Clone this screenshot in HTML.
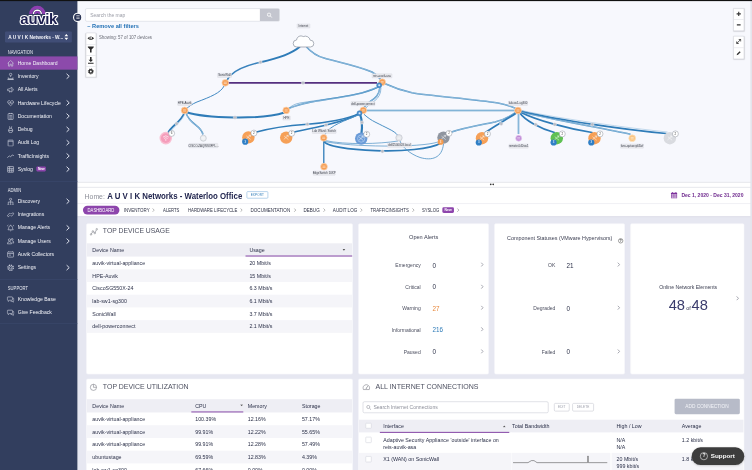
<!DOCTYPE html>
<html lang="en">
<head>
<meta charset="utf-8">
<title>Auvik - Home Dashboard</title>
<style>
html,body{margin:0;padding:0;background:#fff;}
body{width:752px;height:470px;overflow:hidden;position:relative;font-family:"Liberation Sans",sans-serif;}
#app{filter:contrast(1);position:absolute;left:0;top:0;width:1360px;height:850px;transform:scale(0.552941);transform-origin:0 0;overflow:hidden;background:#fff;color:#2b3553;font-size:11px;}
#app *{box-sizing:border-box;}
.abs{position:absolute;}
/* sidebar */
#side{position:absolute;left:0;top:0;width:140.4px;height:850px;background:#323e5e;z-index:5;color:#fff;}
#topbar{position:absolute;left:0;top:0;width:1360px;height:1.5px;background:#111;z-index:20;}
.seclabel{position:absolute;left:14px;font-size:8.3px;letter-spacing:.1px;color:#eceef5;transform:scaleX(0.9);transform-origin:0 50%;}
.nav{position:absolute;left:0;width:140.4px;height:24px;line-height:24px;font-size:10.1px;color:#f2f3f8;padding-left:32px;white-space:nowrap;}
.nav.active{background:#8c4aab;}
.nav svg.ic{position:absolute;left:12px;top:4.8px;width:14.4px;height:14.4px;stroke:#ccd0de;fill:none;stroke-width:0.95;}
.nav .chev{position:absolute;left:118.4px;top:6px;width:9.6px;height:12px;stroke:#dde0ec;fill:none;stroke-width:1.5;}
.nav b{font-weight:normal;display:inline-block;transform:scaleX(0.91);transform-origin:0 50%;}
.newb{display:inline-block;background:#8d45ac;color:#fff;font-size:6.5px;font-weight:bold;line-height:9px;height:9px;padding:0 3px;border-radius:2px;vertical-align:1.5px;margin-left:4px;}
.sdiv{position:absolute;left:0;width:140.4px;height:1px;background:#3d4a6e;}
/* main */
#map{position:absolute;left:140px;top:0;width:1220px;height:329px;background:#f7f8fd;overflow:hidden;}
#resize{z-index:2;position:absolute;left:140px;top:329px;width:1220px;height:9.6px;background:#fff;border-top:1.3px solid #d3d4dd;border-bottom:1.3px solid #d3d4dd;}
#hdr{position:absolute;left:140px;top:338px;width:1220px;height:53px;background:#fff;}
#content{position:absolute;left:140px;top:391px;width:1220px;height:459px;background:#e6e7f1;box-shadow:inset 0 2px 0 #dfe0ea;}
.tab{top:36px;font-size:8.8px;line-height:12px;color:#2d3044;white-space:nowrap;transform:scaleX(0.88);transform-origin:0 50%;}
.ctitle{position:absolute;font-size:13.6px;line-height:16px;color:#4d5060;white-space:nowrap;transform:scaleX(0.908);transform-origin:0 50%;}
.thead{position:absolute;background:#eeeef4;}
.cell{position:absolute;font-size:10.6px;color:#2b3048;white-space:nowrap;transform:scaleX(0.906);transform-origin:0 50%;}
.card{overflow:hidden;position:absolute;background:#fff;border:1px solid #f7f7fb;border-radius:3px;}
</style>
</head>
<body>
<div id="app">
<div id="topbar"></div>
<div class="abs" style="left:1357.4px;top:0;width:2.6px;height:850px;background:#e4e4ec;z-index:19"></div>
<div id="side">
<!--SIDE-->
<svg class="abs" style="left:28px;top:4px" width="84" height="44" viewBox="0 0 84 44">
<path d="M27.6 21.5 A12 12 0 0 1 51.6 21.5" fill="none" stroke="#8e3fb0" stroke-width="6"/>
<path d="M32.6 21.5 A7 7 0 0 1 46.6 21.5" fill="none" stroke="#fff" stroke-width="2.6"/>
<path d="M35.8 21.5 A3.8 3.8 0 0 1 43.4 21.5" fill="none" stroke="#8e3fb0" stroke-width="3.8"/>
<text x="42.1" y="38.6" text-anchor="middle" font-family="Liberation Sans, sans-serif" font-weight="bold" font-size="27" fill="#1d2050" stroke="#fff" stroke-width="4" stroke-linejoin="round" paint-order="stroke" letter-spacing="-0.5">auvik</text>
</svg>
<div class="abs" id="collapse" style="left:132px;top:22.5px;width:17px;height:17px;border-radius:50%;background:#2b3556;border:2px solid #fff;z-index:15"><i style="position:absolute;left:3.5px;top:3.5px;width:6px;height:1.4px;background:#fff;box-shadow:0 2.4px 0 #fff,0 4.8px 0 #fff"></i></div>
<div class="abs" style="left:9px;top:57px;width:121px;height:20px;background:#404d76;border-radius:2px;font-size:8.6px;line-height:20px;padding-left:6px;font-weight:bold;color:#f4f5fa;white-space:nowrap">A U V I K Networks - W...<svg class="abs" style="left:105.5px;top:3px" width="10" height="14" viewBox="0 0 10 14"><path d="M1.6 5.6 L5 1.6 L8.4 5.6 Z M1.6 8.4 L5 12.4 L8.4 8.4 Z" fill="#fff"/></svg></div>
<div class="seclabel" style="top:90px">NAVIGATION</div>
<div class="nav active" style="top:102px"><svg class="ic" viewBox="0 0 12 12"><path d="M1.5 6.2 L6 2 L10.5 6.2 M2.8 5.4 V10.5 H5 V7.5 H7 V10.5 H9.2 V5.4"/></svg><b>Home Dashboard</b></div>
<div class="nav" style="top:126px"><svg class="ic" viewBox="0 0 12 12"><circle cx="6" cy="3" r="1.8"/><path d="M6 4.8 V7 M2.5 9.5 H9.5 M2.5 7.5 V10.5 H9.5 V7.5 M1 10.8 H11"/></svg><b>Inventory</b><svg class="chev" viewBox="0 0 8 10"><path d="M2 1.2 L6 5 L2 8.8"/></svg></div>
<div class="nav" style="top:150px"><svg class="ic" viewBox="0 0 12 12"><path d="M1.5 5 H3.5 L8 2.5 V9.5 L3.5 7.5 H1.5 Z M4 7.8 L4.8 10.3 M9.5 4.5 Q10.8 6 9.5 7.5"/></svg><b>All Alerts</b></div>
<div class="nav" style="top:174px"><svg class="ic" viewBox="0 0 12 12"><path d="M6 10.2 L2 6.3 Q0.8 4.2 2.5 2.8 Q4.4 1.8 6 3.8 Q7.6 1.8 9.5 2.8 Q11.2 4.2 10 6.3 Z M3 6 H5 L5.8 4.8 L6.6 7 L7.2 6 H9"/></svg><b>Hardware Lifecycle</b><svg class="chev" viewBox="0 0 8 10"><path d="M2 1.2 L6 5 L2 8.8"/></svg></div>
<div class="nav" style="top:198px"><svg class="ic" viewBox="0 0 12 12"><rect x="2.2" y="2" width="7.6" height="9" rx="0.8"/><path d="M4.5 1 V2.8 M7.5 1 V2.8 M4 5 H8 M4 7 H8 M4 9 H8"/></svg><b>Documentation</b><svg class="chev" viewBox="0 0 8 10"><path d="M2 1.2 L6 5 L2 8.8"/></svg></div>
<div class="nav" style="top:222px"><svg class="ic" viewBox="0 0 12 12"><ellipse cx="6" cy="7.5" rx="3.2" ry="3.3"/><path d="M4.3 1.2 L5 4.3 M7.7 1.2 L7 4.3 M2.8 7.5 H9.2"/></svg><b>Debug</b><svg class="chev" viewBox="0 0 8 10"><path d="M2 1.2 L6 5 L2 8.8"/></svg></div>
<div class="nav" style="top:246px"><svg class="ic" viewBox="0 0 12 12"><rect x="2.2" y="2" width="7.6" height="9" rx="0.8"/><path d="M2.2 3.8 H9.8"/></svg><b>Audit Log</b><svg class="chev" viewBox="0 0 8 10"><path d="M2 1.2 L6 5 L2 8.8"/></svg></div>
<div class="nav" style="top:270px"><svg class="ic" viewBox="0 0 12 12"><path d="M1 8.5 L4 5.8 L6 7.3 L8.3 4.3 L11 5.5"/></svg><b>TrafficInsights</b><svg class="chev" viewBox="0 0 8 10"><path d="M2 1.2 L6 5 L2 8.8"/></svg></div>
<div class="nav" style="top:294px"><svg class="ic" viewBox="0 0 12 12"><rect x="1.5" y="1.8" width="9" height="8.6" rx="0.6"/><path d="M1.5 4.6 H10.5 M1.5 7.4 H10.5 M4.5 1.8 V10.4 M7.8 4.6 V10.4"/></svg><b>Syslog <span class="newb">New</span></b><svg class="chev" viewBox="0 0 8 10"><path d="M2 1.2 L6 5 L2 8.8"/></svg></div>
<div class="sdiv" style="top:328px"></div>
<div class="seclabel" style="top:339.5px">ADMIN</div>
<div class="nav" style="top:352px"><svg class="ic" viewBox="0 0 12 12"><circle cx="6" cy="2.8" r="1.6"/><path d="M6 4.4 V7 M2.5 9.8 V7 H9.5 V9.8 M1.3 10.5 H3.7 M8.3 10.5 H10.7 M6 7 V9.8 M4.8 10.5 H7.2"/></svg><b>Discovery</b><svg class="chev" viewBox="0 0 8 10"><path d="M2 1.2 L6 5 L2 8.8"/></svg></div>
<div class="nav" style="top:376px"><svg class="ic" viewBox="0 0 12 12"><path d="M5.2 6.8 L3.5 8.5 Q2.3 9.3 1.6 8.4 Q0.8 7.4 1.8 6.4 L4 4.3 Q5 3.6 6 4.4 M6.8 5.2 L8.5 3.5 Q9.7 2.7 10.4 3.6 Q11.2 4.6 10.2 5.6 L8 7.7 Q7 8.4 6 7.6"/></svg><b>Integrations</b></div>
<div class="nav" style="top:400px"><svg class="ic" viewBox="0 0 12 12"><path d="M2 8.8 H10 Q8.8 7.8 8.8 5.5 Q8.8 2.8 6 2.5 Q3.2 2.8 3.2 5.5 Q3.2 7.8 2 8.8 Z M5 10 Q6 11 7 10 M6 1.2 V2.4 M1 3.5 Q1.3 2.2 2.4 1.5 M11 3.5 Q10.7 2.2 9.6 1.5"/></svg><b>Manage Alerts</b><svg class="chev" viewBox="0 0 8 10"><path d="M2 1.2 L6 5 L2 8.8"/></svg></div>
<div class="nav" style="top:424px"><svg class="ic" viewBox="0 0 12 12"><circle cx="4.3" cy="4" r="1.7"/><path d="M1.2 10 Q1.2 6.6 4.3 6.6 Q7.4 6.6 7.4 10 Z"/><circle cx="8.3" cy="3.2" r="1.3"/><path d="M8.3 5.4 Q10.9 5.4 10.9 8.6 H8.4"/></svg><b>Manage Users</b><svg class="chev" viewBox="0 0 8 10"><path d="M2 1.2 L6 5 L2 8.8"/></svg></div>
<div class="nav" style="top:448px"><svg class="ic" viewBox="0 0 12 12"><rect x="1.5" y="2.2" width="9" height="7.8" rx="0.8"/><path d="M1.5 4.6 H10.5 M3.5 7 H6.5 M3 1.2 V2.2 M9 1.2 V2.2"/></svg><b>Auvik Collectors</b></div>
<div class="nav" style="top:472px"><svg class="ic" viewBox="0 0 12 12"><circle cx="6" cy="6" r="1.8"/><circle cx="6" cy="6" r="4" stroke-dasharray="2 1.1" stroke-width="2"/></svg><b>Settings</b><svg class="chev" viewBox="0 0 8 10"><path d="M2 1.2 L6 5 L2 8.8"/></svg></div>
<div class="sdiv" style="top:505px"></div>
<div class="seclabel" style="top:517px">SUPPORT</div>
<div class="nav" style="top:529px"><svg class="ic" viewBox="0 0 12 12"><path d="M2 2.5 H8 Q9 2.5 9 3.5 V6.5 Q9 7.5 8 7.5 H4.5 L2.5 9.3 V7.5 H2 Q1 7.5 1 6.5 V3.5 Q1 2.5 2 2.5 Z M9.3 4.5 H10 Q11 4.5 11 5.5 V8 Q11 9 10 9 V10.5 L8.3 9 H6"/></svg><b>Knowledge Base</b></div>
<div class="nav" style="top:553px"><svg class="ic" viewBox="0 0 12 12"><path d="M2 2.5 H8 Q9 2.5 9 3.5 V6.5 Q9 7.5 8 7.5 H4.5 L2.5 9.3 V7.5 H2 Q1 7.5 1 6.5 V3.5 Q1 2.5 2 2.5 Z M9.3 4.5 H10 Q11 4.5 11 5.5 V8 Q11 9 10 9 V10.5 L8.3 9 H6"/></svg><b>Give Feedback</b></div>
<div class="sdiv" style="top:585px"></div>
<!--/SIDE-->
</div>
<div id="map">
<!--MAP-->
<svg class="abs" style="left:0;top:0" width="1220" height="329" viewBox="77.419 0 674.58 181.92" font-family="Liberation Sans, sans-serif">
<path d="M299.5 47 C290 55 275 59 260.5 62.2" fill="none" stroke="#2f7cb8" stroke-width="2.0" stroke-linecap="round"/>
<path d="M260.5 62.2 C248 65 236 70 231 75 C228.5 77.5 227.3 79.5 226.6 81" fill="none" stroke="#3a83bd" stroke-width="1.6" stroke-linecap="round"/>
<path d="M306.5 47 C313 54 320 57 324 58 C335 61.5 355 65 372 72 C376 74 379 77 381 80" fill="none" stroke="#4a90c4" stroke-width="1.5"/><path d="M306.5 47 C313 54 320 57 324 58 C335 61.5 355 65 372 72 C376 74 379 77 381 80" fill="none" stroke="#d9e8f4" stroke-width="0.45"/>
<path d="M227 82.8 H377" stroke="#55307f" stroke-width="1.8" fill="none"/>
<path d="M224.3 85.5 C221 93 210 97 197 102 C192 104 189 106.5 187 108.3" fill="none" stroke="#3f88c2" stroke-width="1.0"/>
<path d="M186 112 C205 118.5 262 120 284.5 112.5" fill="none" stroke="#2f7cb8" stroke-width="1.9" stroke-linecap="round"/>
<path d="M288 109 C310 98 352 100 378 87" fill="none" stroke="#4a90c4" stroke-width="1.5"/><path d="M288 109 C310 98 352 100 378 87" fill="none" stroke="#d9e8f4" stroke-width="0.45"/>
<path d="M379 87 C360 96 330 98 300 103 C294 104 290 107 288 109" fill="none" stroke="#4a90c4" stroke-width="0.6"/>
<path d="M184.3 113 C181 122 171 126 168 133" fill="none" stroke="#2f7cb8" stroke-width="1.8" stroke-linecap="round"/>
<path d="M185 113 C183 121 173 127 169.5 133" fill="none" stroke="#9cc3e0" stroke-width="0.6"/>
<path d="M186 113 C190 125 201 125 203 134.5" fill="none" stroke="#4a90c4" stroke-width="1.5"/><path d="M186 113 C190 125 201 125 203 134.5" fill="none" stroke="#d9e8f4" stroke-width="0.45"/>
<path d="M359 113.6 C348 119 325 123 307.4 124.2 C290 125.4 270 128 255.5 132.3" fill="none" stroke="#2f7cb8" stroke-width="1.5" stroke-linecap="round"/>
<path d="M359 114 C348 120 332 123.5 326 125 C316 127.8 302 129.5 293.5 132.3" fill="none" stroke="#2f7cb8" stroke-width="1.5" stroke-linecap="round"/>
<path d="M359 114.6 C345 121 330 125 325 134.5" fill="none" stroke="#4a90c4" stroke-width="1.0"/>
<path d="M379.8 87.5 C379 100 368 100 364 108" fill="none" stroke="#4a90c4" stroke-width="1.5"/><path d="M379.8 87.5 C379 100 368 100 364 108" fill="none" stroke="#d9e8f4" stroke-width="0.45"/>
<path d="M381 87.5 C381 101 370 102 365.5 108.5" fill="none" stroke="#4a90c4" stroke-width="0.6"/>
<path d="M384.5 83.5 C392 87 402 90.5 412 92.7 C430 96 475 99 498 103 C506 104.5 512 106.5 516 108.7" fill="none" stroke="#4a90c4" stroke-width="1.5"/><path d="M384.5 83.5 C392 87 402 90.5 412 92.7 C430 96 475 99 498 103 C506 104.5 512 106.5 516 108.7" fill="none" stroke="#d9e8f4" stroke-width="0.45"/>
<path d="M366 110.4 H515" fill="none" stroke="#4a90c4" stroke-width="1.5"/><path d="M366 110.4 H515" fill="none" stroke="#d9e8f4" stroke-width="0.45"/>
<path d="M360.3 115 C362 120 362.5 126 361.5 133" fill="none" stroke="#2f7cb8" stroke-width="2.2" stroke-linecap="round"/>
<path d="M364 114.3 C368 118 372 120.5 375 122 C381 125 385 127 389 129 C393 131 396 133 397.5 135" fill="none" stroke="#4a90c4" stroke-width="1.0"/>
<path d="M323.8 141 V164" fill="none" stroke="#2f7cb8" stroke-width="1.3" stroke-linecap="round"/>
<path d="M324 141 C326 151 420 156 441 143" fill="none" stroke="#2f7cb8" stroke-width="1.6" stroke-linecap="round"/>
<path d="M325 140.5 C345 145 380 144 398 141" fill="none" stroke="#4a90c4" stroke-width="0.7"/>
<path d="M325 141.5 C350 147 420 148 438 142" fill="none" stroke="#4a90c4" stroke-width="0.7"/>
<path d="M400 141 C402 147 410 154 420 157.5 C432 161 442 158 443.5 144" fill="none" stroke="#4a90c4" stroke-width="0.8"/>
<path d="M450 132.5 C465 127.5 485 124.2 495 122 C503 120 511 116 516 112.2" fill="none" stroke="#4a90c4" stroke-width="1.5"/><path d="M450 132.5 C465 127.5 485 124.2 495 122 C503 120 511 116 516 112.2" fill="none" stroke="#d9e8f4" stroke-width="0.45"/>
<path d="M517 112.5 C508 119 494 126 485.5 132.5" fill="none" stroke="#2f7cb8" stroke-width="1.7" stroke-linecap="round"/>
<path d="M518.5 114 V134" fill="none" stroke="#4a90c4" stroke-width="1.5"/><path d="M518.5 114 V134" fill="none" stroke="#d9e8f4" stroke-width="0.45"/>
<path d="M519.5 112.5 C525 120.5 540 128.5 554.5 132.5" fill="none" stroke="#2f7cb8" stroke-width="1.7" stroke-linecap="round"/>
<path d="M520 112 C537 120.5 567 128.5 592 132.5" fill="none" stroke="#2f7cb8" stroke-width="1.7" stroke-linecap="round"/>
<path d="M520.5 111.5 C552 120 600 127.5 630.5 134.2" fill="none" stroke="#4a90c4" stroke-width="1.5"/><path d="M520.5 111.5 C552 120 600 127.5 630.5 134.2" fill="none" stroke="#d9e8f4" stroke-width="0.45"/>
<path d="M521 111 C560 120.5 625 129.5 666 133.5" fill="none" stroke="#2f7cb8" stroke-width="1.7" stroke-linecap="round"/>
<path d="M521 110.4 C562 119 628 128 667.5 132" fill="none" stroke="#9cc3e0" stroke-width="0.6"/>
<circle cx="260.5" cy="62.2" r="1.65" fill="#b7bbc4" stroke="#e9ebf1" stroke-width="0.5"/>
<circle cx="303" cy="82.8" r="1.65" fill="#b7bbc4" stroke="#e9ebf1" stroke-width="0.5"/>
<circle cx="235" cy="117.5" r="1.65" fill="#b7bbc4" stroke="#e9ebf1" stroke-width="0.5"/>
<circle cx="176.6" cy="123.7" r="1.65" fill="#b7bbc4" stroke="#e9ebf1" stroke-width="0.5"/>
<circle cx="307.4" cy="124.2" r="1.65" fill="#b7bbc4" stroke="#e9ebf1" stroke-width="0.5"/>
<circle cx="326" cy="124.9" r="1.65" fill="#b7bbc4" stroke="#e9ebf1" stroke-width="0.5"/>
<circle cx="362" cy="122.5" r="1.65" fill="#b7bbc4" stroke="#e9ebf1" stroke-width="0.5"/>
<circle cx="382.4" cy="151.3" r="1.65" fill="#b7bbc4" stroke="#e9ebf1" stroke-width="0.5"/>
<circle cx="501.3" cy="123.8" r="1.65" fill="#b7bbc4" stroke="#e9ebf1" stroke-width="0.5"/>
<circle cx="535.8" cy="124.6" r="1.65" fill="#b7bbc4" stroke="#e9ebf1" stroke-width="0.5"/>
<circle cx="554.8" cy="124.4" r="1.65" fill="#b7bbc4" stroke="#e9ebf1" stroke-width="0.5"/>
<circle cx="592.3" cy="124.4" r="1.65" fill="#b7bbc4" stroke="#e9ebf1" stroke-width="0.5"/>
<path d="M296.8 47 a3.5 3.5 0 0 1 -0.2 -7 a4.3 4.3 0 0 1 6.6 -3.4 a5 5 0 0 1 7 3.6 a3.2 3.2 0 0 1 0.4 6.8 z" fill="#fff" stroke="#8f96a3" stroke-width="0.75"/>
<circle cx="225.3" cy="82.8" r="3.4" fill="#f6a057" stroke="#fbd9bd" stroke-width="0.7"/><path d="M223.8 82.2 h3 M223.8 83.5 h3" stroke="#fff" stroke-width="0.5" opacity="0.85"/>
<circle cx="382.2" cy="82.2" r="3.4" fill="#f6a057" stroke="#fbd9bd" stroke-width="0.7"/><path d="M380.7 81.60000000000001 h3 M380.7 82.9 h3" stroke="#fff" stroke-width="0.5" opacity="0.85"/>
<circle cx="379.2" cy="85.2" r="2.5" fill="#4a8dcf" stroke="#2f7cb8" stroke-width="0.5"/><circle cx="379.2" cy="85.2" r="1" fill="#d7e6f6"/>
<circle cx="184.6" cy="110.4" r="3.4" fill="#f6a057" stroke="#fbd9bd" stroke-width="0.7"/><path d="M183.1 109.80000000000001 h3 M183.1 111.10000000000001 h3" stroke="#fff" stroke-width="0.5" opacity="0.85"/>
<circle cx="286.2" cy="110.4" r="3.4" fill="#f6a057" stroke="#fbd9bd" stroke-width="0.7"/><path d="M284.7 109.80000000000001 h3 M284.7 111.10000000000001 h3" stroke="#fff" stroke-width="0.5" opacity="0.85"/>
<circle cx="363.3" cy="110.3" r="3.4" fill="#f6a057" stroke="#fbd9bd" stroke-width="0.7"/><path d="M361.8 109.7 h3 M361.8 111.0 h3" stroke="#fff" stroke-width="0.5" opacity="0.85"/>
<circle cx="359.5" cy="113.2" r="2.5" fill="#4a8dcf" stroke="#2f7cb8" stroke-width="0.5"/><circle cx="359.5" cy="113.2" r="1" fill="#d7e6f6"/>
<circle cx="518" cy="110.5" r="3.4" fill="#f6a057" stroke="#fbd9bd" stroke-width="0.7"/><path d="M516.5 109.9 h3 M516.5 111.2 h3" stroke="#fff" stroke-width="0.5" opacity="0.85"/>
<circle cx="323.7" cy="137.8" r="3.4" fill="#f6a057" stroke="#fbd9bd" stroke-width="0.7"/><path d="M322.2 137.20000000000002 h3 M322.2 138.5 h3" stroke="#fff" stroke-width="0.5" opacity="0.85"/>
<circle cx="324" cy="166.7" r="3.4" fill="#f6a057" stroke="#fbd9bd" stroke-width="0.7"/><path d="M322.5 166.1 h3 M322.5 167.39999999999998 h3" stroke="#fff" stroke-width="0.5" opacity="0.85"/>
<circle cx="165.8" cy="138.1" r="6.3" fill="#f9bfd2"/><circle cx="165.8" cy="138.1" r="4.9" fill="#f59dbb"/><path d="M163 137.1 q2.8 -2.6 5.6 0 M164 138.5 q1.8 -1.6 3.6 0" stroke="#fff" stroke-width="0.6" fill="none"/><circle cx="165.8" cy="139.9" r="0.6" fill="#fff"/>
<circle cx="171.6" cy="133.4" r="3" fill="#fff" stroke="#8d939e" stroke-width="0.5"/><text x="171.6" y="134.4" text-anchor="middle" font-size="3" fill="#444">6</text>
<circle cx="203.3" cy="138.2" r="3.0" fill="#eceef1" stroke="#c2c5cb" stroke-width="0.7"/><path d="M201.8 137.6 h3 M201.8 138.89999999999998 h3" stroke="#fff" stroke-width="0.5" opacity="0.85"/>
<circle cx="248.4" cy="137.4" r="6.2" fill="#f6a057"/><path d="M246.0 139.20000000000002 L250.4 135.20000000000002 M250.4 135.20000000000002 h-1.8 M250.4 135.20000000000002 v1.8 M246.4 135.9 L250.6 139.4" stroke="#fff" stroke-width="0.55" fill="none" opacity="0.9"/><circle cx="253.9" cy="133.1" r="3" fill="#fff" stroke="#8d939e" stroke-width="0.5"/><text x="253.9" y="134.1" text-anchor="middle" font-size="3" fill="#444">2</text><circle cx="245.20000000000002" cy="141.70000000000002" r="3.1" fill="#2f7fc6"/><text x="245.20000000000002" y="142.70000000000002" text-anchor="middle" font-size="2.9" fill="#fff">3</text>
<circle cx="286.2" cy="137.6" r="6.2" fill="#f6a057"/><path d="M283.8 139.4 L288.2 135.4 M288.2 135.4 h-1.8 M288.2 135.4 v1.8 M284.2 136.1 L288.4 139.6" stroke="#fff" stroke-width="0.55" fill="none" opacity="0.9"/><circle cx="291.7" cy="133.29999999999998" r="3" fill="#fff" stroke="#8d939e" stroke-width="0.5"/><text x="291.7" y="134.29999999999998" text-anchor="middle" font-size="3" fill="#444">2</text>
<circle cx="361.2" cy="138.6" r="6.2" fill="#6a9bd8"/><path d="M358.8 140.4 L363.2 136.4 M363.2 136.4 h-1.8 M363.2 136.4 v1.8 M359.2 137.1 L363.4 140.6" stroke="#fff" stroke-width="0.55" fill="none" opacity="0.9"/><circle cx="366.7" cy="134.29999999999998" r="3" fill="#fff" stroke="#8d939e" stroke-width="0.5"/><text x="366.7" y="135.29999999999998" text-anchor="middle" font-size="3" fill="#444">2</text>
<circle cx="361.2" cy="138.6" r="3.6" fill="none" stroke="#a9c8ee" stroke-width="0.8"/>
<circle cx="399" cy="137.8" r="3.2" fill="#e4e6ea" stroke="#c3c6ce" stroke-width="0.7"/><path d="M397.5 137.20000000000002 h3 M397.5 138.5 h3" stroke="#fff" stroke-width="0.5" opacity="0.85"/>
<circle cx="443.5" cy="137.6" r="6.2" fill="#8f959f"/><path d="M441.1 139.4 L445.5 135.4 M445.5 135.4 h-1.8 M445.5 135.4 v1.8 M441.5 136.1 L445.7 139.6" stroke="#fff" stroke-width="0.55" fill="none" opacity="0.9"/><circle cx="449.0" cy="133.29999999999998" r="3" fill="#fff" stroke="#8d939e" stroke-width="0.5"/><text x="449.0" y="134.29999999999998" text-anchor="middle" font-size="3" fill="#444">2</text>
<circle cx="440.6" cy="141.9" r="2.9" fill="#f59b4e"/><text x="440.6" y="142.9" text-anchor="middle" font-size="2.9" fill="#fff">3</text>
<circle cx="482" cy="138.2" r="6.2" fill="#f6a057"/><path d="M479.6 140.0 L484 136.0 M484 136.0 h-1.8 M484 136.0 v1.8 M480 136.7 L484.2 140.2" stroke="#fff" stroke-width="0.55" fill="none" opacity="0.9"/><circle cx="487.5" cy="133.89999999999998" r="3" fill="#fff" stroke="#8d939e" stroke-width="0.5"/><text x="487.5" y="134.89999999999998" text-anchor="middle" font-size="3" fill="#444">2</text><circle cx="478.8" cy="142.5" r="3.1" fill="#2f7fc6"/><text x="478.8" y="143.5" text-anchor="middle" font-size="2.9" fill="#fff">3</text>
<circle cx="518.7" cy="138.2" r="3.0" fill="#c08ad6" stroke="#e5cdf0" stroke-width="0.7"/><path d="M517.2 137.6 h3 M517.2 138.89999999999998 h3" stroke="#fff" stroke-width="0.5" opacity="0.85"/>
<circle cx="556.8" cy="138.2" r="6.2" fill="#5fc152"/><path d="M554.4 140.0 L558.8 136.0 M558.8 136.0 h-1.8 M558.8 136.0 v1.8 M554.8 136.7 L559.0 140.2" stroke="#fff" stroke-width="0.55" fill="none" opacity="0.9"/><circle cx="562.3" cy="133.89999999999998" r="3" fill="#fff" stroke="#8d939e" stroke-width="0.5"/><text x="562.3" y="134.89999999999998" text-anchor="middle" font-size="3" fill="#444">2</text><circle cx="553.5999999999999" cy="142.5" r="3.1" fill="#2f7fc6"/><text x="553.5999999999999" y="143.5" text-anchor="middle" font-size="2.9" fill="#fff">3</text>
<circle cx="594.5" cy="138.2" r="6.2" fill="#f6a057"/><path d="M592.1 140.0 L596.5 136.0 M596.5 136.0 h-1.8 M596.5 136.0 v1.8 M592.5 136.7 L596.7 140.2" stroke="#fff" stroke-width="0.55" fill="none" opacity="0.9"/><circle cx="600.0" cy="133.89999999999998" r="3" fill="#fff" stroke="#8d939e" stroke-width="0.5"/><text x="600.0" y="134.89999999999998" text-anchor="middle" font-size="3" fill="#444">2</text><circle cx="591.3" cy="142.5" r="3.1" fill="#2f7fc6"/><text x="591.3" y="143.5" text-anchor="middle" font-size="2.9" fill="#fff">3</text>
<circle cx="632.2" cy="138.2" r="3.4" fill="#fac684" stroke="#fde3bf" stroke-width="0.7"/><path d="M630.7 137.6 h3 M630.7 138.89999999999998 h3" stroke="#fff" stroke-width="0.5" opacity="0.85"/>
<circle cx="669.9" cy="138.2" r="6.2" fill="#d9dbe0"/><path d="M667.5 140.0 L671.9 136.0 M671.9 136.0 h-1.8 M671.9 136.0 v1.8 M667.9 136.7 L672.1 140.2" stroke="#fff" stroke-width="0.55" fill="none" opacity="0.9"/><circle cx="675.4" cy="133.89999999999998" r="3" fill="#fff" stroke="#8d939e" stroke-width="0.5"/><text x="675.4" y="134.89999999999998" text-anchor="middle" font-size="3" fill="#444">2</text>
<rect x="297.0" y="23.9" width="13.0" height="4.2" rx="0.5" fill="#e9eaee" stroke="#cfd1d8" stroke-width="0.3"/><text x="303.5" y="27.0" text-anchor="middle" font-size="2.9" fill="#3b3f4c">Internet</text>
<rect x="217.5" y="73.3" width="14.0" height="4.2" rx="0.5" fill="#e9eaee" stroke="#cfd1d8" stroke-width="0.3"/><text x="224.5" y="76.4" text-anchor="middle" font-size="2.9" fill="#3b3f4c">SonicWall</text>
<rect x="372.0" y="73.7" width="20.0" height="4.2" rx="0.5" fill="#e9eaee" stroke="#cfd1d8" stroke-width="0.3"/><text x="382" y="76.8" text-anchor="middle" font-size="2.9" fill="#3b3f4c">reis-auvik-asa</text>
<rect x="177.6" y="101.2" width="14.0" height="4.2" rx="0.5" fill="#e9eaee" stroke="#cfd1d8" stroke-width="0.3"/><text x="184.6" y="104.3" text-anchor="middle" font-size="2.9" fill="#3b3f4c">HPE-Auvik</text>
<rect x="282.8" y="115.9" width="7.5" height="4.2" rx="0.5" fill="#e9eaee" stroke="#cfd1d8" stroke-width="0.3"/><text x="286.5" y="119.0" text-anchor="middle" font-size="2.9" fill="#3b3f4c">HPE</text>
<rect x="351.0" y="101.5" width="24.0" height="4.2" rx="0.5" fill="#e9eaee" stroke="#cfd1d8" stroke-width="0.3"/><text x="363" y="104.6" text-anchor="middle" font-size="2.9" fill="#3b3f4c">dell-powerconnect</text>
<rect x="508.5" y="101.2" width="19.0" height="4.2" rx="0.5" fill="#e9eaee" stroke="#cfd1d8" stroke-width="0.3"/><text x="518" y="104.3" text-anchor="middle" font-size="2.9" fill="#3b3f4c">lab-sw1-sg300</text>
<rect x="312.2" y="129.2" width="24.0" height="4.2" rx="0.5" fill="#e9eaee" stroke="#cfd1d8" stroke-width="0.3"/><text x="324.2" y="132.3" text-anchor="middle" font-size="2.9" fill="#3b3f4c">Lab Wlan/c Switch</text>
<rect x="313.2" y="171.1" width="22.0" height="4.2" rx="0.5" fill="#e9eaee" stroke="#cfd1d8" stroke-width="0.3"/><text x="324.2" y="174.2" text-anchor="middle" font-size="2.9" fill="#3b3f4c">EdgeSwitch 10XP</text>
<rect x="188.9" y="143.5" width="29.0" height="4.2" rx="0.5" fill="#e9eaee" stroke="#cfd1d8" stroke-width="0.3"/><text x="203.4" y="146.6" text-anchor="middle" font-size="2.9" fill="#3b3f4c">CISCO-ZAQWSXFPL...</text>
<rect x="387.5" y="143.1" width="24.0" height="4.2" rx="0.5" fill="#e9eaee" stroke="#cfd1d8" stroke-width="0.3"/><text x="399.5" y="146.2" text-anchor="middle" font-size="2.9" fill="#3b3f4c">dell2500003.local</text>
<rect x="509.2" y="144.0" width="19.0" height="4.2" rx="0.5" fill="#e9eaee" stroke="#cfd1d8" stroke-width="0.3"/><text x="518.7" y="147.1" text-anchor="middle" font-size="2.9" fill="#3b3f4c">remote.040sw1</text>
<rect x="620.5" y="144.0" width="23.0" height="4.2" rx="0.5" fill="#e9eaee" stroke="#cfd1d8" stroke-width="0.3"/><text x="632" y="147.1" text-anchor="middle" font-size="2.9" fill="#3b3f4c">fans-qatuovjd45zf</text>
</svg>
<div class="abs" style="left:13.5px;top:14.5px;width:352px;height:24.5px;background:#fff;border:1px solid #d2d4dc;border-radius:3px;font-size:9px;line-height:22px;color:#9a9ca6;padding-left:8px"><span style="display:inline-block;font-size:10px;transform:scaleX(0.9);transform-origin:0 50%">Search the map</span><div class="abs" style="right:0;top:0;width:35px;height:22.5px;background:#c4c6cf;border-radius:0 2px 2px 0"><svg class="abs" style="left:12px;top:6px" width="11" height="11" viewBox="0 0 11 11"><circle cx="4.5" cy="4.5" r="3" fill="none" stroke="#fff" stroke-width="1.5"/><path d="M6.8 6.8 L9.8 9.8" stroke="#fff" stroke-width="1.6"/></svg></div></div>
<div class="abs" style="left:17.5px;top:40px;font-size:11.3px;line-height:12px;font-weight:bold;color:#1f6fb4;white-space:nowrap;transform:scaleX(0.905);transform-origin:0 50%">– Remove all filters</div>
<div class="abs" style="left:39px;top:62.5px;font-size:8.8px;line-height:10px;color:#6a6c76;white-space:nowrap;transform:scaleX(0.892);transform-origin:0 50%">Showing: 57 of 107 devices</div>
<div class="abs" style="left:14.5px;top:59px;width:19.5px;height:80.5px;background:#fff;border:1px solid #d5d7de;border-radius:2px;box-shadow:0 1px 2px rgba(0,0,0,.12)"><svg class="abs" style="left:1.6px;top:2.3px" width="14.4" height="14.4" viewBox="0 0 12 12"><path d="M1 6 Q6 0.6 11 6 Q6 11.4 1 6 Z" fill="#2a2a2a"/><circle cx="6" cy="5.6" r="2" fill="#fff"/><circle cx="6" cy="5.6" r="1.1" fill="#2a2a2a"/></svg><svg class="abs" style="left:1.6px;top:22.3px" width="14.4" height="14.4" viewBox="0 0 12 12"><path d="M1.5 1.6 H10.5 V2.8 L7.2 6.4 V10.8 H4.8 V6.4 L1.5 2.8 Z" fill="#2a2a2a"/></svg><i class="abs" style="left:0;top:19.5px;width:17.5px;height:1px;background:#dfe0e6"></i><svg class="abs" style="left:1.6px;top:42.3px" width="14.4" height="14.4" viewBox="0 0 12 12"><path d="M4.8 1 H7.2 V5 H9.4 L6 8.6 L2.6 5 H4.8 Z M1.8 9.4 H10.2 V11 H1.8 Z" fill="#2a2a2a"/></svg><i class="abs" style="left:0;top:39.5px;width:17.5px;height:1px;background:#dfe0e6"></i><svg class="abs" style="left:1.6px;top:62.3px" width="14.4" height="14.4" viewBox="0 0 12 12"><circle cx="6" cy="6" r="2.5" fill="none" stroke="#2a2a2a" stroke-width="2.1"/><circle cx="6" cy="6" r="3.8" fill="none" stroke="#2a2a2a" stroke-width="1.3" stroke-dasharray="1.5 1.485"/></svg><i class="abs" style="left:0;top:59.5px;width:17.5px;height:1px;background:#dfe0e6"></i></div>
<div class="abs" style="left:1185.5px;top:14.5px;width:20.5px;height:41.5px;background:#fff;border:1px solid #d5d7de;border-radius:2px;box-shadow:0 1px 2px rgba(0,0,0,.12)"><i class="abs" style="left:0;top:19.7px;width:18.5px;height:1px;background:#dfe0e6"></i><svg class="abs" style="left:4.2px;top:4.4px" width="10" height="10" viewBox="0 0 10 10"><path d="M5 1.2 V8.8 M1.2 5 H8.8" stroke="#333" stroke-width="2"/></svg><svg class="abs" style="left:4.2px;top:24.6px" width="10" height="10" viewBox="0 0 10 10"><path d="M1.6 5 H8.4" stroke="#333" stroke-width="2"/></svg></div>
<div class="abs" style="left:1185.5px;top:65px;width:20.5px;height:41.5px;background:#fff;border:1px solid #d5d7de;border-radius:2px;box-shadow:0 1px 2px rgba(0,0,0,.12)"><i class="abs" style="left:0;top:19.7px;width:18.5px;height:1px;background:#dfe0e6"></i><svg class="abs" style="left:4.2px;top:4.4px" width="10" height="10" viewBox="0 0 10 10"><path d="M1.5 8.5 L8.5 1.5 M5 1.3 H8.7 V5 M5 8.7 H1.3 V5" stroke="#333" stroke-width="1.5" fill="none"/></svg><svg class="abs" style="left:4.2px;top:24.6px" width="10" height="10" viewBox="0 0 10 10"><path d="M1.2 8.8 L2 6.2 L6.6 1.6 L8.4 3.4 L3.8 8 Z" fill="#333"/></svg></div>
<!--/MAP-->
</div>
<div id="resize"><i class="abs" style="left:745.5px;top:2px;width:3px;height:3px;border-radius:50%;background:#333;box-shadow:4.5px 0 0 #333"></i></div>
<div id="hdr">
<!--HDR-->
<div class="abs" style="left:13.4px;top:6px;height:19px;line-height:19px;white-space:nowrap;transform:scaleX(0.928);transform-origin:0 50%"><span style="font-size:13.4px;color:#8d8f99">Home:</span><span style="font-size:15.3px;font-weight:bold;color:#22264f;margin-left:4.6px">A U V I K Networks - Waterloo Office</span></div>
<div class="abs" style="left:306.2px;top:8.2px;width:38.5px;height:13px;border:1px solid #7fb0dc;border-radius:2px;font-size:5.6px;line-height:11.4px;text-align:center;color:#2f7cb8;letter-spacing:.2px">EXPORT</div>
<svg class="abs" style="left:1072.8px;top:8.6px" width="12.4" height="12.4" viewBox="0 0 12 12"><rect x="0.5" y="1.6" width="11" height="10" rx="1" fill="#7b2d9b"/><path d="M3 0.3 V2.6 M9 0.3 V2.6" stroke="#7b2d9b" stroke-width="1.4"/><path d="M0.5 5 H11.5 M0.5 7.3 H11.5 M0.5 9.5 H11.5 M3.3 3.6 V11.6 M6 3.6 V11.6 M8.7 3.6 V11.6" stroke="#fff" stroke-width="0.7"/></svg>
<div class="abs" style="left:1092.3px;top:9px;font-size:9.1px;line-height:12px;font-weight:bold;color:#6f2a8e;white-space:nowrap">Dec 1, 2020 - Dec 31, 2020</div>
<div class="abs" style="left:0;top:29.6px;width:1220px;height:1px;background:#e4e5ec"></div>
<div class="abs" style="left:9.7px;top:33.6px;width:66px;height:16px;border-radius:8px;background:#8d45ac;color:#fff;font-size:8.7px;line-height:16.4px;text-align:center"><span style="display:inline-block;transform:scaleX(0.88)">DASHBOARD</span></div>
<div class="abs tab" style="left:84.1px;transform:scaleX(0.915)">INVENTORY</div>
<svg class="abs" style="left:134.7px;top:38px" width="5" height="8" viewBox="0 0 5 8"><path d="M1 1 L4 4 L1 7" fill="none" stroke="#777" stroke-width="1"/></svg>
<div class="abs tab" style="left:154.8px;transform:scaleX(0.86)">ALERTS</div>
<div class="abs tab" style="left:199.5px;transform:scaleX(0.88)">HARDWARE LIFECYCLE</div>
<svg class="abs" style="left:293.8px;top:38px" width="5" height="8" viewBox="0 0 5 8"><path d="M1 1 L4 4 L1 7" fill="none" stroke="#777" stroke-width="1"/></svg>
<div class="abs tab" style="left:312.5px;transform:scaleX(0.94)">DOCUMENTATION</div>
<svg class="abs" style="left:390.6px;top:38px" width="5" height="8" viewBox="0 0 5 8"><path d="M1 1 L4 4 L1 7" fill="none" stroke="#777" stroke-width="1"/></svg>
<div class="abs tab" style="left:409.4px;transform:scaleX(0.93)">DEBUG</div>
<svg class="abs" style="left:444.0px;top:38px" width="5" height="8" viewBox="0 0 5 8"><path d="M1 1 L4 4 L1 7" fill="none" stroke="#777" stroke-width="1"/></svg>
<div class="abs tab" style="left:461.9px;transform:scaleX(0.93)">AUDIT LOG</div>
<svg class="abs" style="left:510.9px;top:38px" width="5" height="8" viewBox="0 0 5 8"><path d="M1 1 L4 4 L1 7" fill="none" stroke="#777" stroke-width="1"/></svg>
<div class="abs tab" style="left:530.0px;transform:scaleX(0.88)">TRAFFICINSIGHTS</div>
<svg class="abs" style="left:604.9px;top:38px" width="5" height="8" viewBox="0 0 5 8"><path d="M1 1 L4 4 L1 7" fill="none" stroke="#777" stroke-width="1"/></svg>
<div class="abs tab" style="left:622.5px;transform:scaleX(0.87)">SYSLOG</div>
<svg class="abs" style="left:686.3px;top:38px" width="5" height="8" viewBox="0 0 5 8"><path d="M1 1 L4 4 L1 7" fill="none" stroke="#777" stroke-width="1"/></svg>
<div class="abs" style="left:659.9px;top:37px;width:21px;height:9.6px;border-radius:2.5px;background:#8d45ac;color:#fff;font-size:6.2px;font-weight:bold;line-height:9.6px;text-align:center">New</div>
<!--/HDR-->
</div>
<div id="content">
<!--CONTENT-->
<div class="card" style="left:15.8px;top:13px;width:482.2px;height:272.5px"><div class="abs" style="left:-1.8px;top:0px"><svg class="abs" style="left:6.5px;top:5.5px" width="16" height="16" viewBox="0 0 16 16"><path d="M2.5 13 L6 7.5 L9.5 10.5 L13 3.5" fill="none" stroke="#74777f" stroke-width="1"/><circle cx="2.5" cy="13" r="1.4" fill="#fff" stroke="#74777f" stroke-width="0.9"/><circle cx="6" cy="7.5" r="1.4" fill="#fff" stroke="#74777f" stroke-width="0.9"/><circle cx="9.5" cy="10.5" r="1.4" fill="#fff" stroke="#74777f" stroke-width="0.9"/><circle cx="13" cy="3.5" r="1.4" fill="#fff" stroke="#74777f" stroke-width="0.9"/></svg>
<div class="ctitle" style="left:31px;top:5.4px">TOP DEVICE USAGE</div>
<div class="thead" style="left:0;top:35px;width:482px;height:24px"></div>
<div class="cell" style="left:11.6px;top:35px;line-height:24px">Device Name</div>
<div class="cell" style="left:295.5px;top:35px;line-height:24px">Usage</div>
<div class="abs" style="left:289px;top:57.2px;width:194px;height:2px;background:#9159af"></div>
<svg class="abs" style="left:463.5px;top:44.5px" width="6" height="4" viewBox="0 0 6 4"><path d="M0.5 0.5 H5.5 L3 3.5 Z" fill="#555"/></svg>
<div class="cell" style="left:11.6px;top:59px;line-height:23px">auvik-virtual-appliance</div><div class="cell" style="left:295.5px;top:59px;line-height:23px">20 Mbit/s</div>
<div class="abs" style="left:0;top:82px;width:482px;height:23px;background:#f5f5f9"></div>
<div class="cell" style="left:11.6px;top:82px;line-height:23px">HPE-Auvik</div><div class="cell" style="left:295.5px;top:82px;line-height:23px">15 Mbit/s</div>
<div class="cell" style="left:11.6px;top:105px;line-height:23px">CiscoSG550X-24</div><div class="cell" style="left:295.5px;top:105px;line-height:23px">6.3 Mbit/s</div>
<div class="abs" style="left:0;top:128px;width:482px;height:23px;background:#f5f5f9"></div>
<div class="cell" style="left:11.6px;top:128px;line-height:23px">lab-sw1-sg300</div><div class="cell" style="left:295.5px;top:128px;line-height:23px">6.1 Mbit/s</div>
<div class="cell" style="left:11.6px;top:151px;line-height:23px">SonicWall</div><div class="cell" style="left:295.5px;top:151px;line-height:23px">3.7 Mbit/s</div>
<div class="abs" style="left:0;top:174px;width:482px;height:23px;background:#f5f5f9"></div>
<div class="cell" style="left:11.6px;top:174px;line-height:23px">dell-powerconnect</div><div class="cell" style="left:295.5px;top:174px;line-height:23px">2.1 Mbit/s</div></div></div>
<div class="card" style="left:507.6px;top:13px;width:236.6px;height:272.5px"><div class="abs" style="left:.6px;top:0px"><div class="abs" style="left:0;top:18px;width:234px;text-align:center;font-size:10.1px;line-height:13px;color:#3a3d50">Open Alerts</div>
<div class="abs" style="left:0;top:68.0px;width:111.8px;text-align:right;font-size:10.3px;line-height:14px;color:#4a4d5e;white-space:nowrap;transform:scaleX(0.88);transform-origin:100% 50%">Emergency</div>
<div class="abs" style="left:132.8px;top:68.0px;font-size:11.4px;line-height:14px;color:#2b3048">0</div>
<svg class="abs" style="left:220.2px;top:69.2px" width="6" height="9" viewBox="0 0 6 9"><path d="M1.2 1 L4.6 4.5 L1.2 8" fill="none" stroke="#7d7f8c" stroke-width="1.25"/></svg>
<div class="abs" style="left:0;top:107.4px;width:111.8px;text-align:right;font-size:10.3px;line-height:14px;color:#4a4d5e;white-space:nowrap;transform:scaleX(0.88);transform-origin:100% 50%">Critical</div>
<div class="abs" style="left:132.8px;top:107.4px;font-size:11.4px;line-height:14px;color:#2b3048">0</div>
<svg class="abs" style="left:220.2px;top:108.6px" width="6" height="9" viewBox="0 0 6 9"><path d="M1.2 1 L4.6 4.5 L1.2 8" fill="none" stroke="#7d7f8c" stroke-width="1.25"/></svg>
<div class="abs" style="left:0;top:146.1px;width:111.8px;text-align:right;font-size:10.3px;line-height:14px;color:#4a4d5e;white-space:nowrap;transform:scaleX(0.88);transform-origin:100% 50%">Warning</div>
<div class="abs" style="left:132.8px;top:146.1px;font-size:11.4px;line-height:14px;color:#e8873a">27</div>
<svg class="abs" style="left:220.2px;top:147.3px" width="6" height="9" viewBox="0 0 6 9"><path d="M1.2 1 L4.6 4.5 L1.2 8" fill="none" stroke="#7d7f8c" stroke-width="1.25"/></svg>
<div class="abs" style="left:0;top:185.2px;width:111.8px;text-align:right;font-size:10.3px;line-height:14px;color:#4a4d5e;white-space:nowrap;transform:scaleX(0.88);transform-origin:100% 50%">Informational</div>
<div class="abs" style="left:132.8px;top:185.2px;font-size:11.4px;line-height:14px;color:#2f7cb8">216</div>
<svg class="abs" style="left:220.2px;top:186.4px" width="6" height="9" viewBox="0 0 6 9"><path d="M1.2 1 L4.6 4.5 L1.2 8" fill="none" stroke="#7d7f8c" stroke-width="1.25"/></svg>
<div class="abs" style="left:0;top:225.0px;width:111.8px;text-align:right;font-size:10.3px;line-height:14px;color:#4a4d5e;white-space:nowrap;transform:scaleX(0.88);transform-origin:100% 50%">Paused</div>
<div class="abs" style="left:132.8px;top:225.0px;font-size:11.4px;line-height:14px;color:#2b3048">0</div>
<svg class="abs" style="left:220.2px;top:226.2px" width="6" height="9" viewBox="0 0 6 9"><path d="M1.2 1 L4.6 4.5 L1.2 8" fill="none" stroke="#7d7f8c" stroke-width="1.25"/></svg></div></div>
<div class="card" style="left:753.6px;top:13px;width:236.6px;height:272.5px"><div class="abs" style="left:.6px;top:0px"><div class="abs" style="left:21.9px;top:18.5px;font-size:9.75px;line-height:13px;color:#3a3d50;white-space:nowrap">Component Statuses (VMware Hypervisors)</div>
<div class="abs" style="left:222.7px;top:26.0px;width:9px;height:9px;border:1px solid #555;border-radius:50%;font-size:6.5px;line-height:7px;text-align:center;color:#444;font-weight:bold">?</div>
<div class="abs" style="left:0;top:68.0px;width:109.3px;text-align:right;font-size:10.3px;line-height:14px;color:#4a4d5e;white-space:nowrap;transform:scaleX(0.88);transform-origin:100% 50%">OK</div>
<div class="abs" style="left:129.2px;top:68.0px;font-size:11.4px;line-height:14px;color:#2b3048">21</div>
<svg class="abs" style="left:220.9px;top:69.2px" width="6" height="9" viewBox="0 0 6 9"><path d="M1.2 1 L4.6 4.5 L1.2 8" fill="none" stroke="#7d7f8c" stroke-width="1.25"/></svg>
<div class="abs" style="left:0;top:145.7px;width:109.3px;text-align:right;font-size:10.3px;line-height:14px;color:#4a4d5e;white-space:nowrap;transform:scaleX(0.88);transform-origin:100% 50%">Degraded</div>
<div class="abs" style="left:129.2px;top:145.7px;font-size:11.4px;line-height:14px;color:#2b3048">0</div>
<svg class="abs" style="left:220.9px;top:146.9px" width="6" height="9" viewBox="0 0 6 9"><path d="M1.2 1 L4.6 4.5 L1.2 8" fill="none" stroke="#7d7f8c" stroke-width="1.25"/></svg>
<div class="abs" style="left:0;top:225.0px;width:109.3px;text-align:right;font-size:10.3px;line-height:14px;color:#4a4d5e;white-space:nowrap;transform:scaleX(0.88);transform-origin:100% 50%">Failed</div>
<div class="abs" style="left:129.2px;top:225.0px;font-size:11.4px;line-height:14px;color:#2b3048">0</div>
<svg class="abs" style="left:220.9px;top:226.2px" width="6" height="9" viewBox="0 0 6 9"><path d="M1.2 1 L4.6 4.5 L1.2 8" fill="none" stroke="#7d7f8c" stroke-width="1.25"/></svg></div></div>
<div class="card" style="left:999.6px;top:13px;width:206.6px;height:272.5px"><div class="abs" style="left:.6px;top:0px"><div class="abs" style="left:23.4px;top:108.6px;width:160px;text-align:center;font-size:9.3px;line-height:13px;color:#3a3d50;white-space:nowrap">Online Network Elements</div>
<div class="abs" style="left:23.4px;top:131.7px;width:160px;text-align:center;font-size:26.6px;line-height:30px;color:#3a3c6c;white-space:nowrap;letter-spacing:-0.2px">48<span style="font-size:10px;letter-spacing:0;margin:0 1.5px 0 2.5px;color:#34364f">of</span>48</div>
<svg class="abs" style="left:190.1px;top:129.6px" width="6" height="9" viewBox="0 0 6 9"><path d="M1.2 1 L4.6 4.5 L1.2 8" fill="none" stroke="#7d7f8c" stroke-width="1.25"/></svg></div></div>
<div class="card" style="left:15.8px;top:294.4px;width:482.2px;height:200px"><div class="abs" style="left:-1.8px;top:.6px"><svg class="abs" style="left:6px;top:5px" width="16" height="16" viewBox="0 0 16 16"><circle cx="8" cy="8.5" r="5.6" fill="none" stroke="#74777f" stroke-width="1"/><path d="M8 8.5 V2.9 M8 8.5 H13.6" stroke="#74777f" stroke-width="1" fill="none"/></svg>
<div class="ctitle" style="left:31.4px;top:5px;font-size:13.6px;transform:scaleX(0.925)">TOP DEVICE UTILIZATION</div>
<div class="thead" style="left:0;top:35px;width:482px;height:24px"></div>
<div class="cell" style="left:11.6px;top:35px;line-height:24px">Device Name</div>
<div class="cell" style="left:198.2px;top:35px;line-height:24px">CPU</div>
<div class="cell" style="left:293px;top:35px;line-height:24px">Memory</div>
<div class="cell" style="left:391.3px;top:35px;line-height:24px">Storage</div>
<div class="abs" style="left:191px;top:57.2px;width:94px;height:2px;background:#9159af"></div>
<svg class="abs" style="left:279px;top:44.5px" width="6" height="4" viewBox="0 0 6 4"><path d="M0.5 0.5 H5.5 L3 3.5 Z" fill="#555"/></svg>
<div class="cell" style="left:11.6px;top:59px;line-height:23px">auvik-virtual-appliance</div>
<div class="cell" style="left:198.2px;top:59px;line-height:23px">100.39%</div>
<div class="cell" style="left:293px;top:59px;line-height:23px">12.16%</div>
<div class="cell" style="left:391.3px;top:59px;line-height:23px">57.17%</div>
<div class="abs" style="left:0;top:82px;width:482px;height:23px;background:#f5f5f9"></div>
<div class="cell" style="left:11.6px;top:82px;line-height:23px">auvik-virtual-appliance</div>
<div class="cell" style="left:198.2px;top:82px;line-height:23px">99.91%</div>
<div class="cell" style="left:293px;top:82px;line-height:23px">12.22%</div>
<div class="cell" style="left:391.3px;top:82px;line-height:23px">55.65%</div>
<div class="cell" style="left:11.6px;top:105px;line-height:23px">auvik-virtual-appliance</div>
<div class="cell" style="left:198.2px;top:105px;line-height:23px">99.91%</div>
<div class="cell" style="left:293px;top:105px;line-height:23px">12.28%</div>
<div class="cell" style="left:391.3px;top:105px;line-height:23px">57.49%</div>
<div class="abs" style="left:0;top:128px;width:482px;height:23px;background:#f5f5f9"></div>
<div class="cell" style="left:11.6px;top:128px;line-height:23px">ubuntustage</div>
<div class="cell" style="left:198.2px;top:128px;line-height:23px">69.59%</div>
<div class="cell" style="left:293px;top:128px;line-height:23px">12.83%</div>
<div class="cell" style="left:391.3px;top:128px;line-height:23px">4.39%</div>
<div class="cell" style="left:11.6px;top:151px;line-height:23px">lab-sw1-sg300</div>
<div class="cell" style="left:198.2px;top:151px;line-height:23px">67.66%</div>
<div class="cell" style="left:293px;top:151px;line-height:23px">0.00%</div>
<div class="cell" style="left:391.3px;top:151px;line-height:23px">0.00%</div>
<div class="abs" style="left:0;top:174px;width:482px;height:23px;background:#f5f5f9"></div>
<div class="cell" style="left:11.6px;top:174px;line-height:23px">HPE-Auvik</div>
<div class="cell" style="left:198.2px;top:174px;line-height:23px">55.12%</div>
<div class="cell" style="left:293px;top:174px;line-height:23px">31.40%</div>
<div class="cell" style="left:391.3px;top:174px;line-height:23px">12.05%</div></div></div>
<div class="card" style="left:507.6px;top:294.4px;width:698.6px;height:200px;overflow:hidden"><div class="abs" style="left:.6px;top:.6px"><svg class="abs" style="left:6.2px;top:6px" width="15" height="14" viewBox="0 0 15 14"><path d="M2.2 11.5 A6 6 0 1 1 12.8 11.5 Z" fill="none" stroke="#74777f" stroke-width="1"/><path d="M7.5 9 L10.5 5" stroke="#74777f" stroke-width="1.1"/><circle cx="7.5" cy="9.2" r="1" fill="#8a8d98"/></svg>
<div class="ctitle" style="left:29.7px;top:5.4px;font-size:13.6px;transform:scaleX(0.934)">ALL INTERNET CONNECTIONS</div>
<div class="abs" style="left:7.1px;top:39.2px;width:336.2px;height:20.6px;border:1px solid #c9cbd4;border-radius:3px;background:#fff;font-size:9.2px;line-height:19px;color:#8e909b;padding-left:18px;white-space:nowrap">Search Internet Connections<svg class="abs" style="left:4.5px;top:4.5px" width="10" height="10" viewBox="0 0 10 10"><circle cx="4" cy="4" r="2.8" fill="none" stroke="#8e909b" stroke-width="1"/><path d="M6.1 6.1 L9 9" stroke="#8e909b" stroke-width="1.1"/></svg></div>
<div class="abs" style="left:353.1px;top:41.7px;width:27.5px;height:15.4px;border:1px solid #c5c7d0;border-radius:2.5px;background:#fff;font-size:5.6px;line-height:13.4px;text-align:center;color:#9a9ca8;letter-spacing:.2px">EDIT</div>
<div class="abs" style="left:385.5px;top:41.7px;width:39.8px;height:15.4px;border:1px solid #c5c7d0;border-radius:2.5px;background:#fff;font-size:5.6px;line-height:13.4px;text-align:center;color:#9a9ca8;letter-spacing:.2px">DELETE</div>
<div class="abs" style="left:570.5px;top:34.3px;width:117.9px;height:27.5px;border-radius:2.5px;background:#b7bbc8;font-size:8.6px;line-height:27.5px;text-align:center;color:#f3f4f8;white-space:nowrap">ADD CONNECTION</div>
<div class="thead" style="left:0;top:71.9px;width:696px;height:23.5px"></div>
<div class="abs" style="left:11.8px;top:77.6px;width:10.6px;height:10.6px;border:1px solid #d2d4dc;border-radius:1.5px;background:#fff"></div>
<div class="cell" style="left:44.2px;top:71.9px;line-height:23.5px">Interface</div>
<div class="cell" style="left:277.3px;top:71.9px;line-height:23.5px">Total Bandwidth</div>
<div class="cell" style="left:466.1px;top:71.9px;line-height:23.5px">High / Low</div>
<div class="cell" style="left:584.0px;top:71.9px;line-height:23.5px">Average</div>
<div class="abs" style="left:37.9px;top:93.7px;width:233.7px;height:2px;background:#8f55ad"></div>
<svg class="abs" style="left:260.0px;top:82.1px" width="6" height="4" viewBox="0 0 6 4"><path d="M0.5 3.5 H5.5 L3 0.5 Z" fill="#555"/></svg>
<div class="abs" style="left:11.8px;top:103.1px;width:10.6px;height:10.6px;border:1px solid #d2d4dc;border-radius:1.5px;background:#fff"></div>
<div class="cell" style="left:44.2px;top:102.8px;line-height:12.1px">Adaptive Security Appliance 'outside' interface on<br>reis-auvik-asa</div>
<div class="cell" style="left:466.1px;top:102.8px;line-height:12.1px">N/A<br>N/A</div>
<div class="cell" style="left:584.0px;top:102.8px;line-height:12.1px">1.2 kbit/s</div>
<div class="abs" style="left:0;top:131.9px;width:696px;height:40px;background:#f5f5f9"></div>
<div class="abs" style="left:11.8px;top:138.2px;width:10.6px;height:10.6px;border:1px solid #d2d4dc;border-radius:1.5px;background:#fff"></div>
<div class="cell" style="left:44.2px;top:137.5px;line-height:12.1px">X1 (WAN) on SonicWall</div>
<div class="cell" style="left:466.1px;top:137.5px;line-height:12.1px">20 Mbit/s<br>999 kbit/s</div>
<div class="cell" style="left:584.0px;top:137.5px;line-height:12.1px">1.8 kbit/s</div>
<div class="abs" style="left:275.5px;top:95.4px;width:1.4px;height:80px;background:#fff"></div>
<div class="abs" style="left:455.1px;top:95.4px;width:1.4px;height:80px;background:#fff"></div>
<svg class="abs" style="left:0;top:0" width="696" height="200" viewBox="0 0 696 200"><path d="M278.8 149.7 L305.9 149.7 L309.5 147.5 L312.2 146.0 L316.7 146.0 L319.5 147.8 L322.2 149.7 L413.7 149.7 L414.0 137.7 L414.8 137.7 L415.1 149.7 L449.3 149.7" fill="none" stroke="#3a3a3a" stroke-width="0.9"/></svg></div></div>
<div class="abs" style="left:1110.8px;top:417.9px;width:94.8px;height:32.2px;border-radius:17px;background:#3d3d3d;color:#fff;font-size:11.3px;font-weight:bold;line-height:32.2px;padding-left:34.8px;box-shadow:0 1px 4px rgba(0,0,0,.25)"><span class="abs" style="left:15.6px;top:9.2px;width:13.6px;height:13.6px;border:1.4px solid #fff;border-radius:50%;font-size:9px;line-height:11px;text-align:center;font-weight:bold">?</span>Support</div>
<!--/CONTENT-->
</div>
</div>
</body>
</html>
